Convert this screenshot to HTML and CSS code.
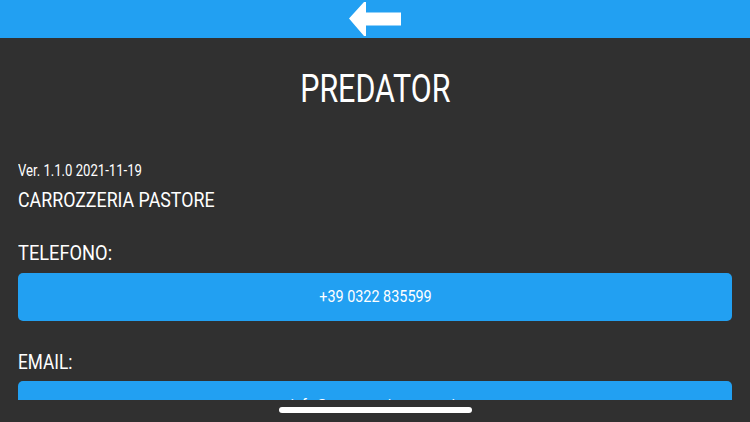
FILE: index.html
```html
<!DOCTYPE html>
<html lang="it">
<head>
<meta charset="utf-8">
<title>PREDATOR</title>
<link rel="stylesheet" href="styles.css">
</head>
<body>
<div class="screen">
  <header class="topbar">
    <svg class="back" width="54" height="36" viewBox="0 0 54 36" aria-label="Indietro">
      <polygon points="1,17.5 16,1 18,1 18,11.5 53,11.5 53,24.5 18,24.5 18,35 16,35" fill="#ffffff"/>
    </svg>
  </header>
  <main class="content">
    <h1 class="title"><span class="narrow-title">PREDATOR</span></h1>
    <p class="version"><span class="narrow narrow-version">Ver. 1.1.0 2021-11-19</span></p>
    <p class="company"><span class="narrow">CARROZZERIA PASTORE</span></p>
    <p class="label"><span class="narrow">TELEFONO:</span></p>
    <div class="btn"><span class="narrow-center">+39 0322 835599</span></div>
    <p class="label"><span class="narrow narrow-email">EMAIL:</span></p>
    <div class="btn"><span class="narrow-center">info@carrozzeriapastore.it</span></div>
  </main>
  <footer class="homebar">
    <div class="indicator"></div>
  </footer>
</div>
</body>
</html>
```

FILE: styles.css
```css
html, body {
  margin: 0;
  padding: 0;
  background: #303030;
}
body {
  font-family: Roboto, "Liberation Sans", sans-serif;
  color: #ffffff;
}
.screen {
  width: 750px;
  height: 422px;
  display: flex;
  flex-direction: column;
  overflow: hidden;
  background: #303030;
}
.topbar {
  height: 38px;
  flex: 0 0 38px;
  background: #22a0f2;
  display: flex;
  justify-content: center;
  align-items: flex-start;
  padding-top: 1px;
  box-sizing: border-box;
}
.back {
  display: block;
}
.content {
  height: 362px;
  flex: 0 0 362px;
  overflow: hidden;
  padding: 0 18px;
  box-sizing: border-box;
}
.title {
  margin: 28px 0 0;
  font-size: 39px;
  line-height: 46px;
  font-weight: 400;
  text-align: center;
}
.narrow-title {
  display: inline-block;
  transform: scaleX(0.78);
  transform-origin: center center;
}
.narrow {
  display: inline-block;
  white-space: nowrap;
  transform: scaleX(0.89);
  transform-origin: left center;
}
.narrow-version {
  transform: scaleX(0.82);
}
.narrow-email {
  transform: scaleX(0.84);
}
.narrow-center {
  display: inline-block;
  white-space: nowrap;
  transform: scaleX(0.9);
  transform-origin: center center;
}
.version {
  margin: 49px 0 0;
  font-size: 16px;
  line-height: 20px;
}
.company {
  margin: 7px 0 0;
  font-size: 20px;
  line-height: 24px;
}
.label {
  margin: 29px 0 0;
  font-size: 20.5px;
  line-height: 24px;
}
.btn {
  margin-top: 7.6px;
  height: 48px;
  border-radius: 5px;
  background: #22a0f2;
  display: flex;
  align-items: center;
  justify-content: center;
  font-size: 16px;
  color: #ffffff;
}
.homebar {
  flex: 1 1 auto;
  display: flex;
  justify-content: center;
  padding-top: 7px;
  box-sizing: border-box;
}
.indicator {
  width: 193px;
  height: 6px;
  border-radius: 3px;
  background: #ffffff;
}
```
